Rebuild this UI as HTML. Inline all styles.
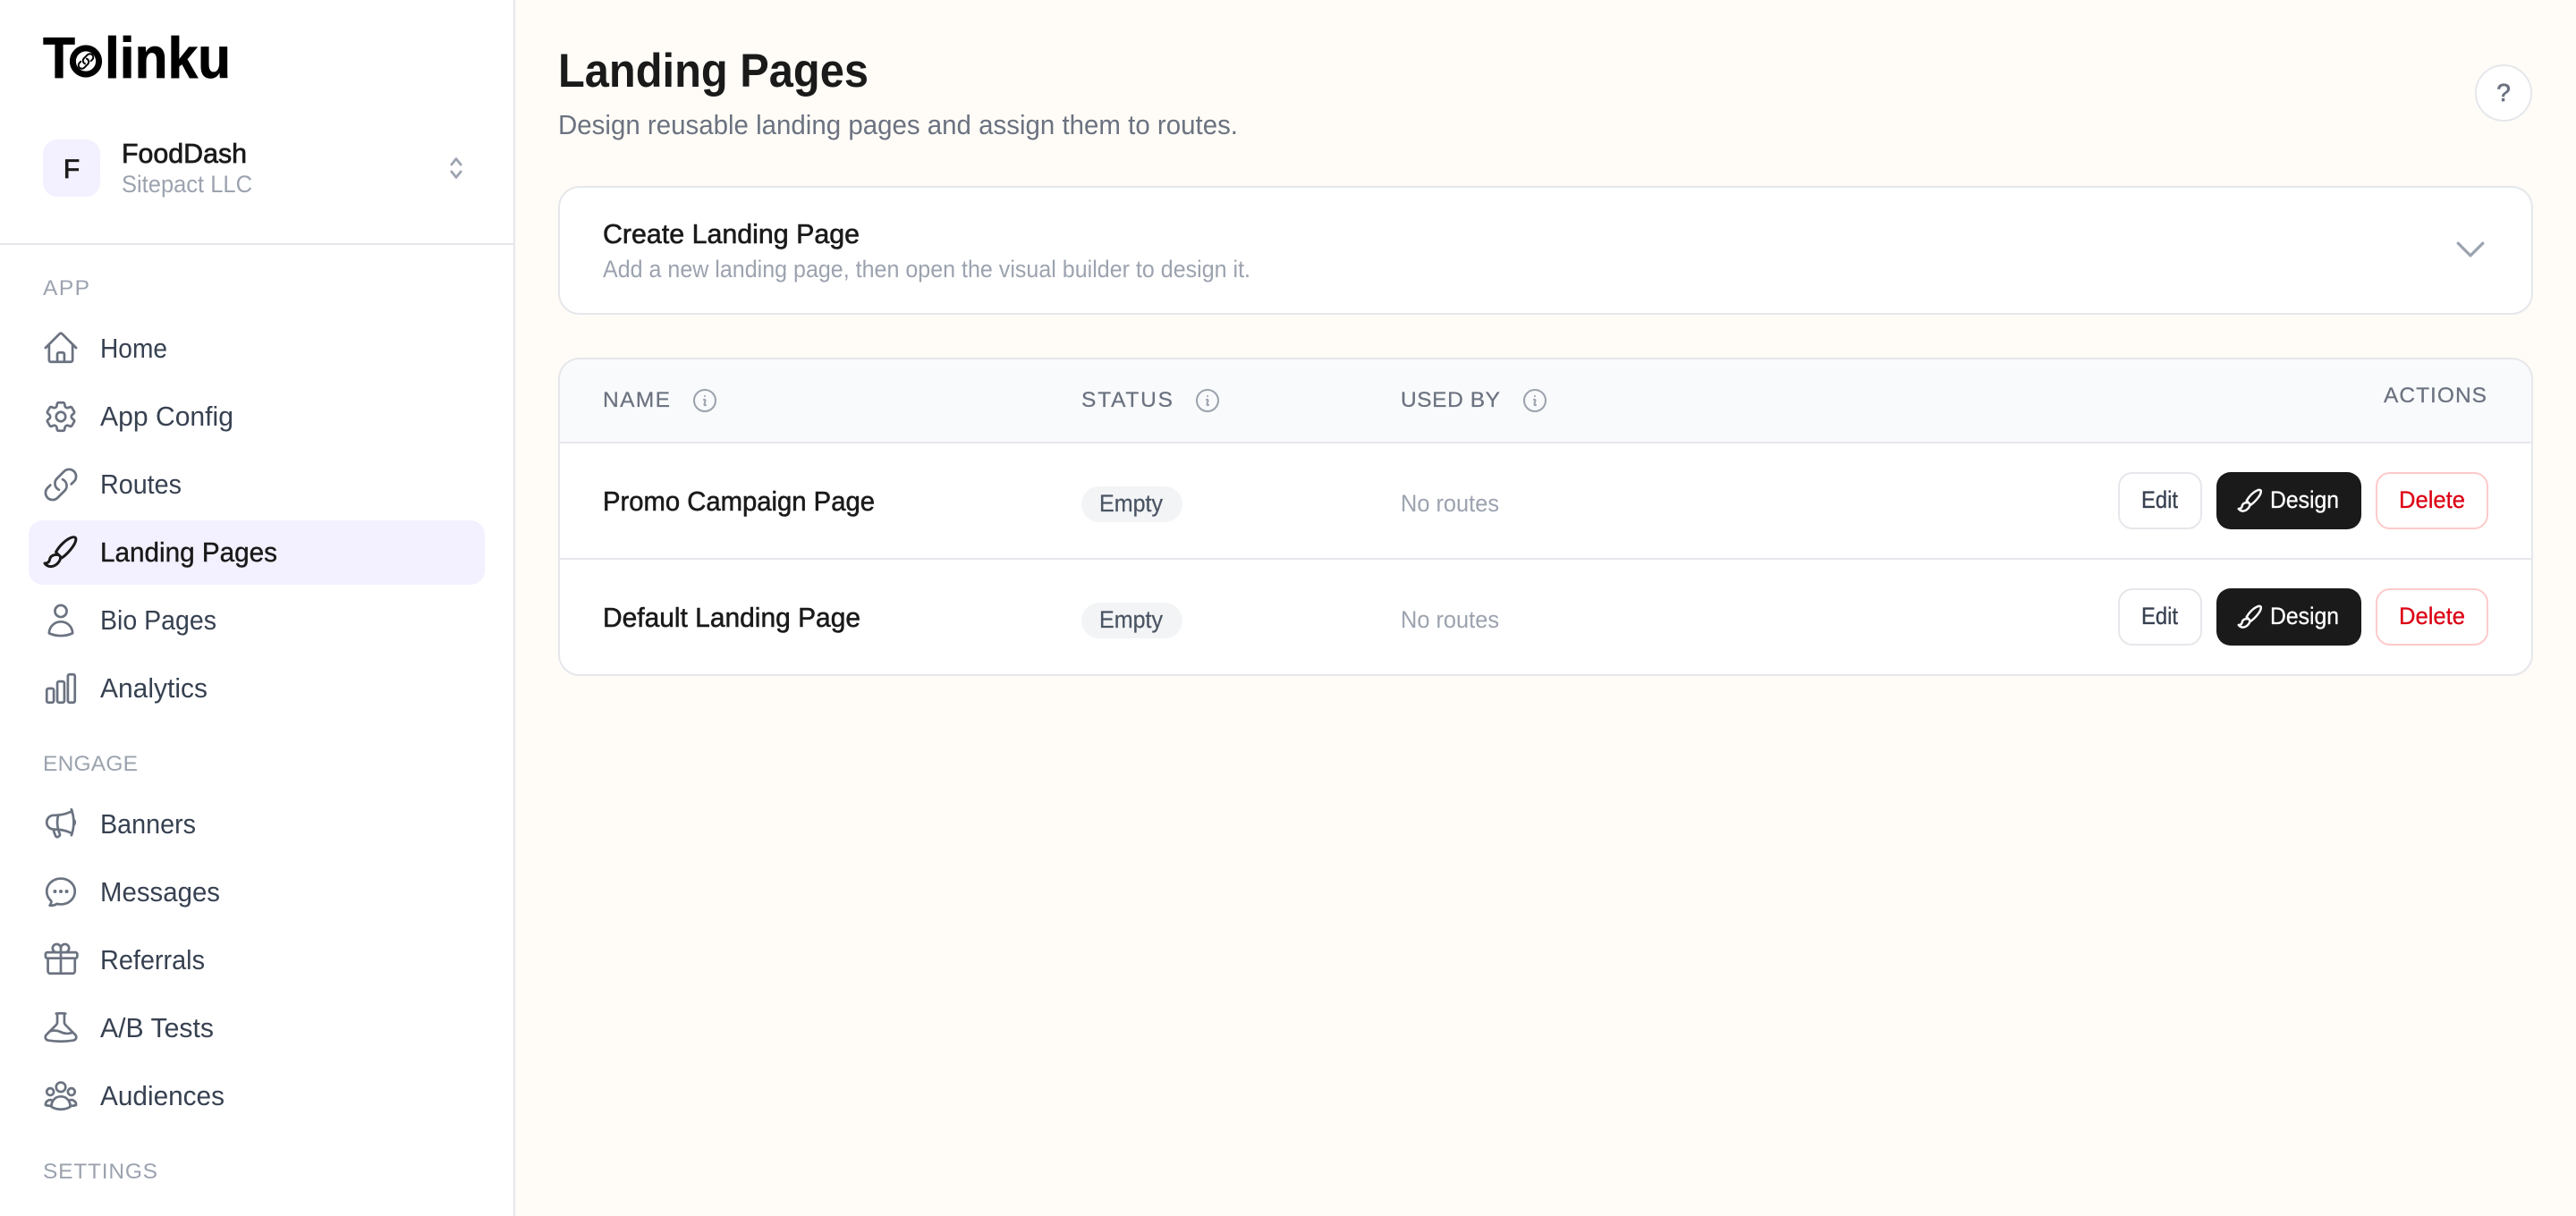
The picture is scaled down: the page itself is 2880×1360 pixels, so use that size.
<!DOCTYPE html>
<html lang="en">
<head>
<meta charset="utf-8">
<title>Landing Pages - Tolinku</title>
<style>
html,body{margin:0;padding:0;width:2880px;height:1360px;overflow:hidden;background:#fffcf7}
svg{display:block}
text{font-family:"Liberation Sans",Arial,sans-serif}
.ic{fill:none;stroke:#6b7280;stroke-width:1.55;stroke-linecap:round;stroke-linejoin:round}
.nav{font-size:30.5px;fill:#374151}
.lab{font-size:24.5px;fill:#9ca3af}
.th{font-size:24.5px;fill:#6b7280;stroke:#6b7280;stroke-width:.25px}
.name{font-size:30.5px;fill:#1a1a1a;stroke:#1a1a1a;stroke-width:.55px}
.btn{font-size:26.5px;stroke-width:.3px}
.nr{font-size:26.5px;fill:#9ca3af}
.bd{font-size:26.5px;fill:#4b5563;stroke:#4b5563;stroke-width:.25px}
</style>
</head>
<body>
<svg width="2880" height="1360" viewBox="0 0 2880 1360" xmlns="http://www.w3.org/2000/svg">
<defs>
<g id="brush" fill="none" stroke-linecap="round" stroke-linejoin="round">
<path d="M22.5 27.5C26 21 33 14 39 11.5C42.5 10 45.5 10.5 44.8 14C44 20 35 30 29 34Z"/>
<path d="M24 30.5C20 30 16 32 15.5 36C15 39 13 40 10 40C12 43 16 44.5 20 43C25 41 28 36 27.5 33"/>
</g>
<path id="info" d="M11.25 11.25l.041-.02a.75.75 0 011.063.852l-.708 2.836a.75.75 0 001.063.853l.041-.021M21 12a9 9 0 11-18 0 9 9 0 0118 0zm-9-3.75h.008v.008H12V8.25z"/>
</defs>

<!-- background -->
<rect width="2880" height="1360" fill="#fffcf7"/>

<!-- sidebar -->
<rect width="575" height="1360" fill="#fff"/>
<rect x="574" width="2" height="1360" fill="#e5e7eb"/>
<rect y="272" width="574" height="2" fill="#e5e7eb"/>

<!-- logo -->
<text x="48" y="87" font-size="65" font-weight="700" fill="#000" stroke="#000" stroke-width=".8" textLength="36" lengthAdjust="spacingAndGlyphs">T</text>
<circle cx="96" cy="68.5" r="14.6" fill="#fff" stroke="#000" stroke-width="7"/>
<g transform="translate(85.8 58.3) scale(.85)" fill="none" stroke="#000" stroke-width="2.3" stroke-linecap="round" stroke-linejoin="round"><path d="M13.19 8.688a4.5 4.5 0 011.242 7.244l-4.5 4.5a4.5 4.5 0 01-6.364-6.364l1.757-1.757m13.35-.622l1.757-1.757a4.5 4.5 0 00-6.364-6.364l-4.5 4.5a4.5 4.5 0 001.242 7.244"/></g>
<text x="117" y="87" font-size="65" font-weight="700" fill="#000" stroke="#000" stroke-width=".8" textLength="141" lengthAdjust="spacingAndGlyphs">linku</text>

<!-- workspace switcher -->
<rect x="48" y="156" width="64" height="64" rx="16" fill="#f3f0ff"/>
<text x="80" y="199" font-size="30" fill="#1a1a1a" stroke="#1a1a1a" stroke-width=".8" text-anchor="middle">F</text>
<text x="136" y="182" font-size="30.5" fill="#1a1a1a" stroke="#1a1a1a" stroke-width=".7" textLength="140" lengthAdjust="spacingAndGlyphs">FoodDash</text>
<text x="136" y="215" font-size="26.5" fill="#9ca3af" textLength="146" lengthAdjust="spacingAndGlyphs">Sitepact LLC</text>
<g transform="translate(494.4 172.4) scale(1.3)" fill="none" stroke="#9ca3af" stroke-width="2.1" stroke-linecap="round" stroke-linejoin="round"><path d="M8 15l4 5 4-5M8 9l4-5 4 5"/></g>

<!-- APP section -->
<text class="lab" x="48" y="330" textLength="52" lengthAdjust="spacing">APP</text>

<g transform="translate(47 368) scale(1.75)" class="ic"><path d="M2.25 12l8.954-8.955c.44-.439 1.152-.439 1.591 0L21.75 12M4.5 9.75v10.125c0 .621.504 1.125 1.125 1.125H9.75v-4.875c0-.621.504-1.125 1.125-1.125h2.25c.621 0 1.125.504 1.125 1.125V21h4.125c.621 0 1.125-.504 1.125-1.125V9.75M8.25 21h8.25"/></g>
<text class="nav" x="112" y="400" textLength="75" lengthAdjust="spacingAndGlyphs">Home</text>

<g transform="translate(47 445) scale(1.75)" class="ic"><path d="M9.594 3.94c.09-.542.56-.94 1.11-.94h2.593c.55 0 1.02.398 1.11.94l.213 1.281c.063.374.313.686.645.87.074.04.147.083.22.127.324.196.72.257 1.075.124l1.217-.456a1.125 1.125 0 011.37.49l1.296 2.247a1.125 1.125 0 01-.26 1.431l-1.003.827c-.293.24-.438.613-.431.992a6.759 6.759 0 010 .255c-.007.378.138.75.43.99l1.005.828c.424.35.534.954.26 1.43l-1.298 2.247a1.125 1.125 0 01-1.369.491l-1.217-.456c-.355-.133-.75-.072-1.076.124a6.57 6.57 0 01-.22.128c-.331.183-.581.495-.644.869l-.213 1.28c-.09.543-.56.941-1.11.941h-2.594c-.55 0-1.02-.398-1.11-.94l-.213-1.281c-.062-.374-.312-.686-.644-.87a6.52 6.52 0 01-.22-.127c-.325-.196-.72-.257-1.076-.124l-1.217.456a1.125 1.125 0 01-1.369-.49l-1.297-2.247a1.125 1.125 0 01.26-1.431l1.004-.827c.292-.24.437-.613.43-.992a6.932 6.932 0 010-.255c.007-.378-.138-.75-.43-.99l-1.004-.828a1.125 1.125 0 01-.26-1.43l1.297-2.247a1.125 1.125 0 011.37-.491l1.216.456c.356.133.751.072 1.076-.124.072-.044.146-.087.22-.128.332-.183.582-.495.644-.869l.214-1.281z"/><path d="M15 12a3 3 0 11-6 0 3 3 0 016 0z"/></g>
<text class="nav" x="112" y="476" textLength="149" lengthAdjust="spacingAndGlyphs">App Config</text>

<g transform="translate(47 521) scale(1.75)" class="ic"><path d="M13.19 8.688a4.5 4.5 0 011.242 7.244l-4.5 4.5a4.5 4.5 0 01-6.364-6.364l1.757-1.757m13.35-.622l1.757-1.757a4.5 4.5 0 00-6.364-6.364l-4.5 4.5a4.5 4.5 0 001.242 7.244"/></g>
<text class="nav" x="112" y="552" textLength="91" lengthAdjust="spacingAndGlyphs">Routes</text>

<rect x="32" y="582" width="510" height="72" rx="16" fill="#f3f0ff"/>
<use href="#brush" transform="translate(40 590)" stroke="#1a1a1a" stroke-width="3"/>
<text class="nav" x="112" y="628" textLength="198" lengthAdjust="spacingAndGlyphs" style="fill:#1a1a1a;stroke:#1a1a1a;stroke-width:.4px">Landing Pages</text>

<g transform="translate(47 673) scale(1.75)" class="ic"><path d="M15.75 6a3.75 3.75 0 11-7.5 0 3.75 3.75 0 017.5 0zM4.501 20.118a7.5 7.5 0 0114.998 0A17.933 17.933 0 0112 21.75c-2.676 0-5.216-.584-7.499-1.632z"/></g>
<text class="nav" x="112" y="704" textLength="130" lengthAdjust="spacingAndGlyphs">Bio Pages</text>

<g transform="translate(47 749) scale(1.75)" class="ic"><path d="M3 13.125C3 12.504 3.504 12 4.125 12h2.25c.621 0 1.125.504 1.125 1.125v6.75C7.5 20.496 6.996 21 6.375 21h-2.25A1.125 1.125 0 013 19.875v-6.75zM9.75 8.625c0-.621.504-1.125 1.125-1.125h2.25c.621 0 1.125.504 1.125 1.125v11.25c0 .621-.504 1.125-1.125 1.125h-2.25a1.125 1.125 0 01-1.125-1.125V8.625zM16.5 4.125c0-.621.504-1.125 1.125-1.125h2.25C20.496 3 21 3.504 21 4.125v15.75c0 .621-.504 1.125-1.125 1.125h-2.25a1.125 1.125 0 01-1.125-1.125V4.125z"/></g>
<text class="nav" x="112" y="780" textLength="120" lengthAdjust="spacingAndGlyphs">Analytics</text>

<!-- ENGAGE section -->
<text class="lab" x="48" y="862" textLength="106" lengthAdjust="spacing">ENGAGE</text>

<g transform="translate(47 900) scale(1.75)" class="ic"><path d="M10.34 15.84c-.688-.06-1.386-.09-2.09-.09H7.5a4.5 4.5 0 110-9h.75c.704 0 1.402-.03 2.09-.09m0 9.18c.253.962.584 1.892.985 2.783.247.55.06 1.21-.463 1.511l-.657.38c-.551.318-1.26.117-1.527-.461a20.845 20.845 0 01-1.44-4.282m3.102.069a18.03 18.03 0 01-.59-4.59c0-1.586.205-3.124.59-4.59m0 9.18a23.848 23.848 0 018.835 2.535M10.34 6.66a23.847 23.847 0 008.835-2.535m0 0A23.74 23.74 0 0018.795 3m.38 1.125a23.91 23.91 0 011.014 5.395m-1.014 8.855c-.118.38-.245.754-.38 1.125m.38-1.125a23.91 23.91 0 001.014-5.395m0-3.46c.495.413.811 1.035.811 1.73 0 .695-.316 1.317-.811 1.73m0-3.46a24.347 24.347 0 010 3.46"/></g>
<text class="nav" x="112" y="932" textLength="107" lengthAdjust="spacingAndGlyphs">Banners</text>

<g transform="translate(47 976) scale(1.75)" class="ic"><path d="M8.625 12a.375.375 0 11-.75 0 .375.375 0 01.75 0zm0 0H8.25m4.125 0a.375.375 0 11-.75 0 .375.375 0 01.75 0zm0 0H12m4.125 0a.375.375 0 11-.75 0 .375.375 0 01.75 0zm0 0h-.375M21 12c0 4.556-4.03 8.25-9 8.25a9.764 9.764 0 01-2.555-.337A5.972 5.972 0 015.41 20.97a5.969 5.969 0 01-.474-.065 4.48 4.48 0 00.978-2.025c.09-.457-.133-.901-.467-1.226C3.93 16.178 3 14.189 3 12c0-4.556 4.03-8.25 9-8.25s9 3.694 9 8.25z"/></g>
<text class="nav" x="112" y="1008" textLength="134" lengthAdjust="spacingAndGlyphs">Messages</text>

<g transform="translate(47 1052) scale(1.75)" class="ic"><path d="M21 11.25v8.25a1.5 1.5 0 01-1.5 1.5H5.25a1.5 1.5 0 01-1.5-1.5v-8.25M12 4.875A2.625 2.625 0 109.375 7.5H12m0-2.625V7.5m0-2.625A2.625 2.625 0 1114.625 7.5H12m0 0V21m-8.625-9.75h18c.621 0 1.125-.504 1.125-1.125v-1.5c0-.621-.504-1.125-1.125-1.125h-18c-.621 0-1.125.504-1.125 1.125v1.5c0 .621.504 1.125 1.125 1.125z"/></g>
<text class="nav" x="112" y="1084" textLength="117" lengthAdjust="spacingAndGlyphs">Referrals</text>

<g transform="translate(47 1128) scale(1.75)" class="ic"><path d="M9.75 3.104v5.714a2.25 2.25 0 01-.659 1.591L5 14.5M9.75 3.104c-.251.023-.501.05-.75.082m.75-.082a24.301 24.301 0 014.5 0m0 0v5.714c0 .597.237 1.17.659 1.591L19.8 15.3M14.25 3.104c.251.023.501.05.75.082M19.8 15.3l-1.57.393A9.065 9.065 0 0112 15a9.065 9.065 0 00-6.23-.693L5 14.5m14.8.8l1.402 1.402c1.232 1.232.65 3.318-1.067 3.611A48.309 48.309 0 0112 21c-2.773 0-5.491-.235-8.135-.687-1.718-.293-2.3-2.379-1.067-3.61L5 14.5"/></g>
<text class="nav" x="112" y="1160" textLength="127" lengthAdjust="spacingAndGlyphs">A/B Tests</text>

<g transform="translate(47 1204) scale(1.75)" class="ic"><path d="M18 18.72a9.094 9.094 0 003.741-.479 3 3 0 00-4.682-2.72m.94 3.198l.001.031c0 .225-.012.447-.037.666A11.944 11.944 0 0112 21c-2.17 0-4.207-.576-5.963-1.584A6.062 6.062 0 016 18.719m12 0a5.971 5.971 0 00-.941-3.197m0 0A5.995 5.995 0 0012 12.75a5.995 5.995 0 00-5.058 2.772m0 0a3 3 0 00-4.681 2.72 8.986 8.986 0 003.74.477m.94-3.197a5.971 5.971 0 00-.94 3.197M15 6.75a3 3 0 11-6 0 3 3 0 016 0zm6 3a2.25 2.25 0 11-4.5 0 2.25 2.25 0 014.5 0zm-13.5 0a2.25 2.25 0 11-4.5 0 2.25 2.25 0 014.5 0z"/></g>
<text class="nav" x="112" y="1236" textLength="139" lengthAdjust="spacingAndGlyphs">Audiences</text>

<text class="lab" x="48" y="1318" textLength="128" lengthAdjust="spacing">SETTINGS</text>

<!-- page header -->
<text x="624" y="97" font-size="53" font-weight="700" fill="#1a1a1a" textLength="347" lengthAdjust="spacingAndGlyphs">Landing Pages</text>
<text x="624" y="150" font-size="30.5" fill="#6b7280" textLength="760" lengthAdjust="spacingAndGlyphs">Design reusable landing pages and assign them to routes.</text>
<circle cx="2799" cy="104" r="31" fill="#fff" stroke="#e5e7eb" stroke-width="2"/>
<text x="2799" y="113" font-size="28" fill="#6b7280" stroke="#6b7280" stroke-width=".7" text-anchor="middle">?</text>

<!-- create card -->
<rect x="625" y="209" width="2206" height="142" rx="23" fill="#fff" stroke="#e5e7eb" stroke-width="2"/>
<text x="674" y="272" font-size="30.5" fill="#1a1a1a" stroke="#1a1a1a" stroke-width=".6" textLength="287" lengthAdjust="spacingAndGlyphs">Create Landing Page</text>
<text x="674" y="310" font-size="26.5" fill="#9ca3af" textLength="724" lengthAdjust="spacingAndGlyphs">Add a new landing page, then open the visual builder to design it.</text>
<g transform="translate(2740 257) scale(1.8333)" fill="none" stroke="#9ca3af" stroke-width="1.8" stroke-linecap="round" stroke-linejoin="round"><path d="M19.5 8.25l-7.5 7.5-7.5-7.5"/></g>

<!-- table -->
<rect x="625" y="401" width="2206" height="354" rx="23" fill="#fff" stroke="#e5e7eb" stroke-width="2"/>
<path d="M626 494V424a22 22 0 0 1 22-22H2808a22 22 0 0 1 22 22V494Z" fill="#f9fafb"/>
<rect x="626" y="494" width="2204" height="2" fill="#e5e7eb"/>
<rect x="626" y="624" width="2204" height="2" fill="#e5e7eb"/>

<text class="th" x="674" y="455" textLength="75" lengthAdjust="spacing">NAME</text>
<g transform="translate(772 432) scale(1.3333)" class="ic" style="stroke:#9ca3af"><use href="#info"/></g>
<text class="th" x="1209" y="455" textLength="102" lengthAdjust="spacing">STATUS</text>
<g transform="translate(1334 432) scale(1.3333)" class="ic" style="stroke:#9ca3af"><use href="#info"/></g>
<text class="th" x="1566" y="455" textLength="111" lengthAdjust="spacing">USED BY</text>
<g transform="translate(1700 432) scale(1.3333)" class="ic" style="stroke:#9ca3af"><use href="#info"/></g>
<text class="th" x="2665" y="450" textLength="115" lengthAdjust="spacing">ACTIONS</text>

<!-- row 1 -->
<text class="name" x="674" y="571" textLength="304" lengthAdjust="spacingAndGlyphs">Promo Campaign Page</text>
<rect x="1209" y="544" width="113" height="40" rx="20" fill="#f3f4f6"/>
<text class="bd" x="1229" y="572" textLength="71" lengthAdjust="spacingAndGlyphs">Empty</text>
<text class="nr" x="1566" y="572" textLength="110" lengthAdjust="spacingAndGlyphs">No routes</text>
<rect x="2369" y="529" width="92" height="62" rx="15" fill="#fff" stroke="#e5e7eb" stroke-width="2"/>
<text class="btn" x="2394" y="568" fill="#374151" stroke="#374151" textLength="41" lengthAdjust="spacingAndGlyphs">Edit</text>
<rect x="2478" y="528" width="162" height="64" rx="16" fill="#1a1a1a"/>
<use href="#brush" transform="translate(2495.5 540.2) scale(.72)" stroke="#fff" stroke-width="3.4"/>
<text class="btn" x="2538" y="568" fill="#fff" stroke="#fff" textLength="77" lengthAdjust="spacingAndGlyphs">Design</text>
<rect x="2657" y="529" width="124" height="62" rx="15" fill="#fff" stroke="#fecaca" stroke-width="2"/>
<text class="btn" x="2682" y="568" fill="#dc0014" stroke="#dc0014" textLength="74" lengthAdjust="spacingAndGlyphs">Delete</text>

<!-- row 2 -->
<text class="name" x="674" y="701" textLength="288" lengthAdjust="spacingAndGlyphs">Default Landing Page</text>
<rect x="1209" y="674" width="113" height="40" rx="20" fill="#f3f4f6"/>
<text class="bd" x="1229" y="702" textLength="71" lengthAdjust="spacingAndGlyphs">Empty</text>
<text class="nr" x="1566" y="702" textLength="110" lengthAdjust="spacingAndGlyphs">No routes</text>
<rect x="2369" y="659" width="92" height="62" rx="15" fill="#fff" stroke="#e5e7eb" stroke-width="2"/>
<text class="btn" x="2394" y="698" fill="#374151" stroke="#374151" textLength="41" lengthAdjust="spacingAndGlyphs">Edit</text>
<rect x="2478" y="658" width="162" height="64" rx="16" fill="#1a1a1a"/>
<use href="#brush" transform="translate(2495.5 670.2) scale(.72)" stroke="#fff" stroke-width="3.4"/>
<text class="btn" x="2538" y="698" fill="#fff" stroke="#fff" textLength="77" lengthAdjust="spacingAndGlyphs">Design</text>
<rect x="2657" y="659" width="124" height="62" rx="15" fill="#fff" stroke="#fecaca" stroke-width="2"/>
<text class="btn" x="2682" y="698" fill="#dc0014" stroke="#dc0014" textLength="74" lengthAdjust="spacingAndGlyphs">Delete</text>
</svg>
</body>
</html>
